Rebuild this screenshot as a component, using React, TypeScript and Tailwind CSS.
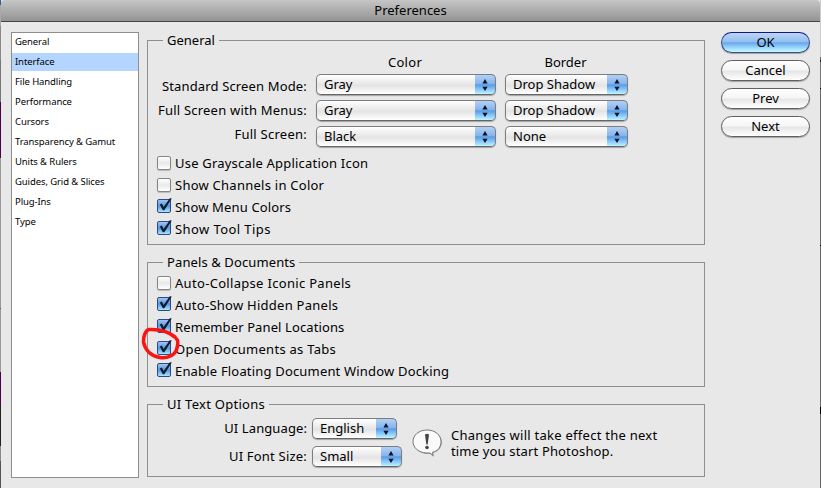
import React from "react";

function Arrows() {
  return (
    <svg width="6" height="12" viewBox="0 0 6 12">
      <path d="M3 0L5.6 4.4H0.4ZM3 12L5.6 7.8H0.4Z" fill="#0a1220" />
    </svg>
  );
}

function Select({ label, className = "", text = "" }: { label: string; className?: string; text?: string }) {
  return (
    <div className={`flex h-[21px] items-center overflow-hidden rounded-[5px] border border-[#7d7d7d] border-b-[#666] bg-linear-to-b from-white via-[#e4e4e4] via-55% to-white shadow-[0_1px_1px_rgba(0,0,0,0.3)] ${className}`}>
      <span className={`flex-1 pl-[7px] leading-[19px] ${text}`}>{label}</span>
      <span className="-my-px -mr-px flex h-[21px] w-[21px] items-center justify-center rounded-r-[5px] border-y border-r border-t-[#1f2f98] border-r-[#2c5aa8] border-b-[#5b7f96] bg-[linear-gradient(#b3d0f4,#86b5ee_45%,#5a9be6_52%,#8ccbfb_78%,#bdf6ff)]">
        <Arrows />
      </span>
    </div>
  );
}

function Check({ label, on = false, text = "" }: { label: string; on?: boolean; text?: string }) {
  return (
    <label className="flex h-[22px] items-center">
      {on ? (
        <svg className="-mt-[3px] overflow-visible" width="15" height="15" viewBox="0 0 15 15">
          <defs>
            <linearGradient id="tick" x1="0" x2="0" y1="0" y2="1">
              <stop offset="0" stopColor="#a9c8f2" />
              <stop offset="0.5" stopColor="#5596e0" />
              <stop offset="1" stopColor="#b0edff" />
            </linearGradient>
          </defs>
          <rect x="0.5" y="1.5" width="13" height="13" rx="1.5" fill="url(#tick)" stroke="#2d4a86" />
          <path d="M2.800 6.400L4.800 5.600L6.600 8.900L12.800 0.200L14.800 0.400L7.300 12.300H5.800Z" fill="#111b2e" />
        </svg>
      ) : (
        <span className="mr-px h-[14px] w-[14px] rounded-[2px] border border-[#858585] bg-linear-to-b from-white via-[#e9e9e9] to-white shadow-[0_1px_1px_rgba(0,0,0,0.2)]" />
      )}
      <span className={`ml-[3px] ${text}`}>{label}</span>
    </label>
  );
}

function Group({ title, className, text = "", children }: { title: string; className: string; text?: string; children: React.ReactNode }) {
  return (
    <fieldset className={`relative w-[558px] border border-[#8e8e8e] ${className}`}>
      <legend className={`ml-[15px] h-[21px] px-[4px] leading-[21px] ${text}`}>{title}</legend>
      {children}
    </fieldset>
  );
}

function Button({ label, primary = false }: { label: string; primary?: boolean }) {
  return (
    <button
      className={`h-[21px] w-[89px] rounded-full border leading-[19px] shadow-[0_1px_1px_rgba(0,0,0,0.3)] ${
        primary
          ? "border-[#3c4a85] border-t-[#14148c] bg-[linear-gradient(#bcd6f6,#94bff0_45%,#68a8ec_52%,#9fdcff_80%,#c8fbff)]"
          : "border-[#5f5f5f] bg-[linear-gradient(#fff,#f6f6f6_45%,#e6e6e6_54%,#fff)]"
      }`}
    >
      {label}
    </button>
  );
}

const sections = ["General", "Interface", "File Handling", "Performance", "Cursors", "Transparency & Gamut", "Units & Rulers", "Guides, Grid & Slices", "Plug-Ins", "Type"];

export default function App() {
  return (
    <div className="flex h-[488px] w-[821px] overflow-hidden bg-[#e8e8e8] font-['Noto_Sans','Lucida_Grande',sans-serif] text-[13px] leading-[16px] text-black">
      <div className="w-px bg-[linear-gradient(#34589c_0_5px,#aaa_5px_26px,#888_26px_60px,#777_60px_102px,#4b0049_102px_158px,#999_158px_308px,#34589c_308px_309px,#999_309px_372px,#4b0049_372px_404px,#222_404px_446px,#888_446px_461px,#555_461px)]" />
      <div className="flex w-[819px] flex-col">
        <header className="h-[22px] rounded-t-[4px] border-b border-[#444] bg-linear-to-b from-[#c6c6c6] to-[#949494] text-center leading-[21px]">Preferences</header>
        <div className="flex h-[466px]">
          <nav className="mt-[10px] ml-[10px] h-[446px] w-[128px] border border-[#8e8e8e] bg-white text-[9.5px] tracking-[-0.1px]">
            {sections.map((s) => (
              <div key={s} className={`mb-[2px] h-[18px] pl-[3px] leading-[18px] ${s === "Interface" ? "bg-[#b4d5ff]" : ""}`}>{s}</div>
            ))}
          </nav>
          <main className="ml-[8px] flex flex-col pt-[8px]">
            <Group title="General" className="h-[215px]">
              <div className="flex">
                <div className="w-[159px] pt-[23px] text-right leading-[24px]">
                  <div className="tracking-[0.15px]">Standard Screen Mode:</div>
                  <div className="tracking-[0.22px]">Full Screen with Menus:</div>
                  <div className="tracking-[0.25px]">Full Screen:</div>
                </div>
                <div className="ml-[9px] flex w-[180px] flex-col gap-[5px]">
                  <div className="h-[18px] pr-[2px] text-center leading-[22px] tracking-[0.3px]">Color</div>
                  <Select label="Gray" />
                  <Select label="Gray" />
                  <Select label="Black" />
                </div>
                <div className="ml-[9px] flex w-[123px] flex-col gap-[5px]">
                  <div className="h-[18px] pr-[2px] text-center leading-[22px]">Border</div>
                  <Select label="Drop Shadow" />
                  <Select label="Drop Shadow" />
                  <Select label="None" />
                </div>
              </div>
              <div className="pt-[5px] pl-[9px]">
                <Check label="Use Grayscale Application Icon" text="tracking-[0.2px]" />
                <Check label="Show Channels in Color" text="tracking-[0.25px]" />
                <Check on label="Show Menu Colors" text="tracking-[0.15px]" />
                <Check on label="Show Tool Tips" text="tracking-[0.42px]" />
              </div>
            </Group>
            <Group title="Panels & Documents" className="mt-[7px] h-[135px]" text="tracking-[0.11px]">
              <div className="-mt-px pl-[9px]">
                <Check label="Auto-Collapse Iconic Panels" text="tracking-[0.31px]" />
                <Check on label="Auto-Show Hidden Panels" text="tracking-[0.26px]" />
                <Check on label="Remember Panel Locations" text="tracking-[0.11px]" />
                <Check on label="Open Documents as Tabs" text="tracking-[0.28px]" />
                <Check on label="Enable Floating Document Window Docking" text="tracking-[0.18px]" />
              </div>
              <svg className="absolute top-[52px] -left-[8px]" width="42" height="38" viewBox="0 0 42 38">
                <path d="M35 12C29 7 20 4 9 4.500C6 5 3 11 3.500 17C5 25 11 31 20 32.500C29 34 36 29 37 23C38 19 38 15 36.500 14" fill="none" stroke="#fb1414" strokeWidth="3.6" strokeLinecap="round" strokeLinejoin="round" />
              </svg>
            </Group>
            <Group title="UI Text Options" className="mt-[7px] h-[83px]" text="tracking-[0.27px]">
              <div className="flex">
                <div className="w-[159px] pb-[4px] text-right leading-[28px]">
                  <div className="-mt-px tracking-[0.1px]">UI Language:</div>
                  <div className="tracking-[0.2px]">UI Font Size:</div>
                </div>
                <div className="ml-[5px] flex w-[90px] flex-col gap-[7px] pt-[3px]">
                  <Select label="English" className="w-[85px]" />
                  <Select label="Small" className="w-[90px]" />
                </div>
                <svg className="mt-[14px] ml-[10px]" width="32" height="30" viewBox="0 0 32 30">
                  <path d="M15 2C7 2 2 7 2 13C2 19 7 24 14 25H18L22 28L21 24C27 22 30 18 30 13C30 7 23 2 15 2Z" fill="#aaa" />
                  <path d="M15 1C7 1 1 6 1 12.500C1 19 7 23.500 14 24H18L21 26.500L20.500 23.300C26 22 29 18 29 12.500C29 6 23 1 15 1Z" fill="#fafafa" stroke="#777" />
                  <path d="M13 5.500Q15 4 17 5.500L15.700 15.500H14.300Z" fill="#444" />
                  <circle cx="15" cy="18.500" r="1.800" fill="#444" />
                </svg>
                <p className="ml-[7px] pt-[12px] whitespace-nowrap">
                  <span className="tracking-[0.26px]">Changes will take effect the next</span>
                  <br />
                  <span className="tracking-[0.16px]">time you start Photoshop.</span>
                </p>
              </div>
            </Group>
          </main>
          <aside className="ml-[16px] flex flex-col gap-[7px] pt-[10px]">
            <Button label="OK" primary />
            <Button label="Cancel" />
            <Button label="Prev" />
            <Button label="Next" />
          </aside>
        </div>
      </div>
      <div className="w-px bg-[linear-gradient(#ccc_0_57px,#666_57px_60px,#222_60px_62px,#777_62px_88px,#000_88px_89px,#666_89px_245px,#000_245px_246px,#666_246px_407px,#000_407px_414px,#666_414px)]" />
    </div>
  );
}
